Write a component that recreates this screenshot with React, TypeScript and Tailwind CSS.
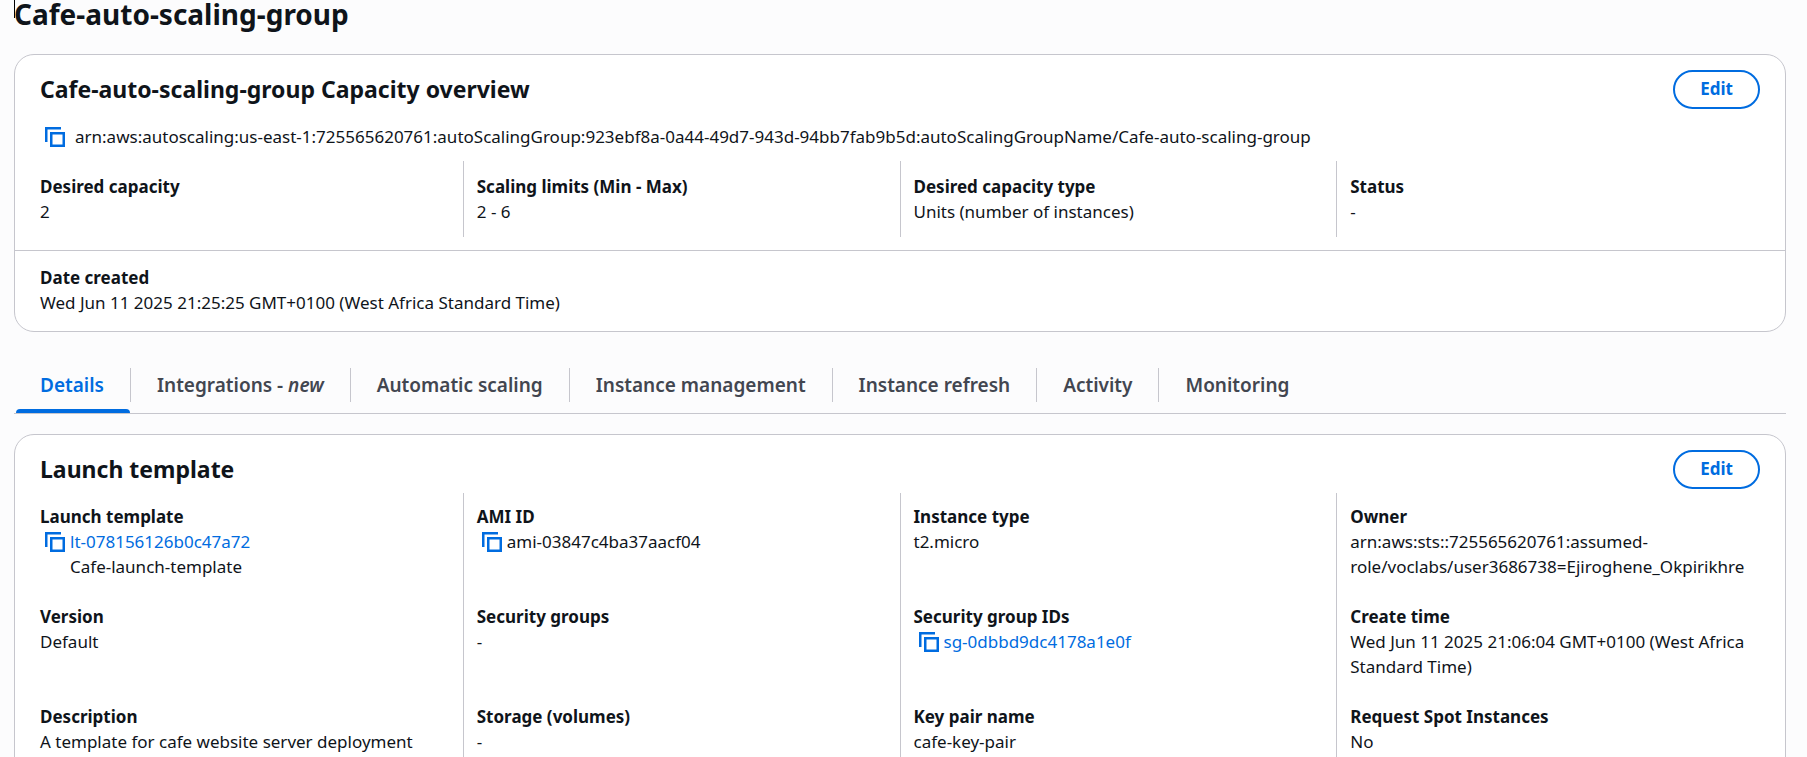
import { useState, type ReactNode } from "react";

function CopyButton({ label }: { label: string }) {
  return (
    <button type="button" aria-label={label} className="shrink-0 text-[#006ce0]">
      <svg width="20" height="20" viewBox="0 0 20 20" fill="none" stroke="currentColor" strokeWidth="2.5" className="block">
        <path d="M16 1.25H1.25V15" />
        <rect x="6.25" y="6.25" width="12.5" height="12.5" />
      </svg>
    </button>
  );
}

function EditButton({ label }: { label: string }) {
  return (
    <button
      type="button"
      aria-label={label}
      className="rounded-full border-2 border-[#006ce0] bg-white px-[25px] pt-1 pb-[6px] text-[17px] leading-[25px] font-bold text-[#006ce0]"
    >
      Edit
    </button>
  );
}

function Card({ title, children }: { title: string; children: ReactNode }) {
  return (
    <section className="rounded-[20px] border border-[#c6c6cd] bg-white">
      <div className="flex items-center justify-between px-[25px] pt-[15px]">
        <h2 className="pb-[2px] text-[23px] leading-[30px] font-bold">{title}</h2>
        <EditButton label={`Edit ${title}`} />
      </div>
      {children}
    </section>
  );
}

function Field({ label, children }: { label: string; children: ReactNode }) {
  return (
    <div>
      <dt className="font-bold">{label}</dt>
      <dd>{children}</dd>
    </div>
  );
}

function Copyable({ label, children }: { label: string; children: ReactNode }) {
  return (
    <span className="flex items-center gap-[5px] pl-[5px]">
      <CopyButton label={label} />
      {children}
    </span>
  );
}

function TextLink({ children }: { children: ReactNode }) {
  return (
    <a href="#" className="text-[#006ce0]">
      {children}
    </a>
  );
}

const overviewFields = [
  { label: "Desired capacity", value: "2" },
  { label: "Scaling limits (Min - Max)", value: "2 - 6" },
  { label: "Desired capacity type", value: "Units (number of instances)" },
  { label: "Status", value: "-" },
];

const tabs: { id: string; title: ReactNode }[] = [
  { id: "details", title: "Details" },
  { id: "integrations", title: <>Integrations - <i>new</i></> },
  { id: "scaling", title: "Automatic scaling" },
  { id: "management", title: "Instance management" },
  { id: "refresh", title: "Instance refresh" },
  { id: "activity", title: "Activity" },
  { id: "monitoring", title: "Monitoring" },
];

const templateColumns: { label: string; value: ReactNode }[][] = [
  [
    {
      label: "Launch template",
      value: (
        <>
          <Copyable label="Copy launch template ID">
            <TextLink>lt-078156126b0c47a72</TextLink>
          </Copyable>
          <span className="block pl-[30px]">Cafe-launch-template</span>
        </>
      ),
    },
    { label: "Version", value: "Default" },
    { label: "Description", value: "A template for cafe website server deployment" },
  ],
  [
    { label: "AMI ID", value: <Copyable label="Copy AMI ID">ami-03847c4ba37aacf04</Copyable> },
    { label: "Security groups", value: "-" },
    { label: "Storage (volumes)", value: "-" },
  ],
  [
    { label: "Instance type", value: "t2.micro" },
    {
      label: "Security group IDs",
      value: (
        <Copyable label="Copy security group ID">
          <TextLink>sg-0dbbd9dc4178a1e0f</TextLink>
        </Copyable>
      ),
    },
    { label: "Key pair name", value: "cafe-key-pair" },
  ],
  [
    { label: "Owner", value: "arn:aws:sts::725565620761:assumed-role/voclabs/user3686738=Ejiroghene_Okpirikhre" },
    { label: "Create time", value: "Wed Jun 11 2025 21:06:04 GMT+0100 (West Africa Standard Time)" },
    { label: "Request Spot Instances", value: "No" },
  ],
];

export default function App() {
  const [active, setActive] = useState("details");

  return (
    <main className="h-screen overflow-hidden bg-[#fcfcfd] pr-[21px] pl-[14px] font-['Noto_Sans',sans-serif] text-[17px] leading-[25px] text-[#0f141a]">
      <div className="relative pb-[26px]">
        <span aria-hidden="true" className="absolute top-0 left-0 h-[18px] w-px bg-black" />
        <h1 className="text-[28px] leading-[28px] font-bold">Cafe-auto-scaling-group</h1>
      </div>

      <Card title="Cafe-auto-scaling-group Capacity overview">
        <div className="mt-[15px] flex items-center gap-[10px] px-[30px]">
          <CopyButton label="Copy ARN" />
          <span>
            arn:aws:autoscaling:us-east-1:725565620761:autoScalingGroup:923ebf8a-0a44-49d7-943d-94bb7fab9b5d:autoScalingGroupName/Cafe-auto-scaling-group
          </span>
        </div>
        <dl className="mt-3 mr-3 mb-[13px] ml-[11px] grid grid-cols-4">
          {overviewFields.map((f) => (
            <div key={f.label} className="border-l border-[#c6c6cd] px-[13px] py-[13px] first:border-transparent">
              <Field label={f.label}>{f.value}</Field>
            </div>
          ))}
        </dl>
        <dl className="border-t border-[#c6c6cd] px-[25px] pt-[14px] pb-4">
          <Field label="Date created">Wed Jun 11 2025 21:25:25 GMT+0100 (West Africa Standard Time)</Field>
        </dl>
      </Card>

      <div role="tablist" className="mt-[36px] flex border-b border-[#c6c6cd]">
        {tabs.map((t) => (
          <div key={t.id} className="group">
            <button
              type="button"
              role="tab"
              aria-selected={active === t.id}
              onClick={() => setActive(t.id)}
              className="block border-r border-[#c6c6cd] px-[26px] py-1 text-[19px] leading-[26px] font-semibold text-[#424650] group-last:border-transparent aria-selected:text-[#006ce0]"
            >
              {t.title}
            </button>
            <div className={active === t.id ? "mt-[7px] mr-px ml-[2px] h-1 rounded-t-sm bg-[#006ce0]" : "mt-[7px] h-1"} />
          </div>
        ))}
      </div>

      <div className="mt-5">
        <Card title="Launch template">
          <dl className="mt-1 mr-3 ml-[11px] grid grid-cols-4 gap-y-[25px] pb-3">
            {templateColumns.map((column, i) => (
              <div
                key={i}
                className="row-span-3 grid grid-rows-subgrid border-l border-[#c6c6cd] px-[13px] pt-[11px] pb-3 first:border-transparent"
              >
                {column.map((f) => (
                  <Field key={f.label} label={f.label}>
                    {f.value}
                  </Field>
                ))}
              </div>
            ))}
          </dl>
        </Card>
      </div>
    </main>
  );
}
